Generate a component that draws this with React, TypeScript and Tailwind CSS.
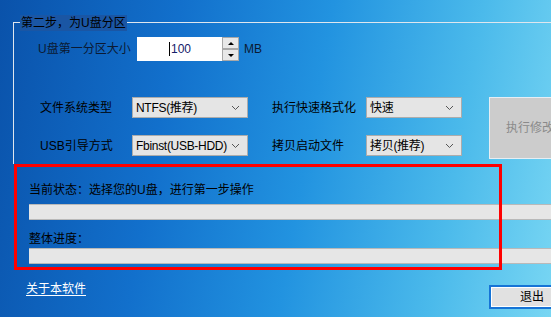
import React from "react";

function Chevron() {
  return (
    <svg width="9" height="6" viewBox="0 0 9 6" className="shrink-0">
      <polyline points="1,1 4.5,4.5 8,1" fill="none" stroke="#555" strokeWidth="1" />
    </svg>
  );
}

function Select({ value, width }: { value: string; width: string }) {
  return (
    <div
      className={`${width} flex h-[21px] items-center justify-between border border-[#acacac] bg-[#e5e5e5] pl-[3px] pr-[7px]`}
    >
      <span className="whitespace-nowrap tracking-[-0.3px]">{value}</span>
      <Chevron />
    </div>
  );
}

export default function App() {
  return (
    <div className="relative h-[317px] w-[551px] overflow-hidden bg-[linear-gradient(100deg,#0a52aa_0%,#1270cc_30%,#2293e0_55%,#4bbaeb_80%,#78d6f3_100%)] font-['Liberation_Sans','Noto_Sans_CJK_SC',sans-serif] text-[12px] leading-[14px] text-black">
      {/* group box */}
      <div className="relative ml-[13px] mt-[22px] h-[142px] border-l border-t border-[#dfe6ee] pl-[24px] pt-[14px]">
        <span className="absolute left-[6px] top-[-8px] bg-[#1a56a4] px-[1px] py-[1px] whitespace-nowrap">
          第二步，为U盘分区
        </span>

        <div className="flex h-[24px] items-center">
          <span className="w-[99px] whitespace-nowrap text-[#0b1a33]">U盘第一分区大小</span>
          <div className="flex h-[24px] w-[85px] items-center bg-white pl-[32px] text-[#14206a]">
            <span className="mr-[1px] h-[14px] w-[1px] bg-black" />
            100
          </div>
          <div className="flex h-[24px] w-[17px] flex-col">
            <div className="flex h-[12px] items-center justify-center border border-[#a8a8a8] bg-[#e8e8e8]">
              <span className="h-0 w-0 border-x-[3px] border-b-[3px] border-x-transparent border-b-black" />
            </div>
            <div className="flex h-[12px] items-center justify-center border border-[#a8a8a8] bg-[#e8e8e8]">
              <span className="h-0 w-0 border-x-[3px] border-t-[3px] border-x-transparent border-t-black" />
            </div>
          </div>
          <span className="ml-[5px] text-[#0b1a33]">MB</span>
        </div>

        <div className="mt-[36px] flex">
          <div className="ml-[2px] flex flex-col gap-[17px]">
            <div className="flex items-center">
              <span className="w-[92px] whitespace-nowrap">文件系统类型</span>
              <Select value="NTFS(推荐)" width="w-[116px]" />
              <span className="ml-[24px] w-[94px] whitespace-nowrap">执行快速格式化</span>
              <Select value="快速" width="w-[96px]" />
            </div>
            <div className="flex items-center">
              <span className="w-[92px] whitespace-nowrap">USB引导方式</span>
              <Select value="Fbinst(USB-HDD)" width="w-[116px]" />
              <span className="ml-[24px] w-[94px] whitespace-nowrap">拷贝启动文件</span>
              <Select value="拷贝(推荐)" width="w-[96px]" />
            </div>
          </div>
          <div className="ml-[27px] flex h-[62px] w-[80px] shrink-0 items-center border border-[#e6eef4] bg-[#cccccc] pl-[16px] text-[#8a8a8a] whitespace-nowrap">
            执行修改
          </div>
        </div>
      </div>

      {/* status */}
      <div className="ml-[29px] mt-[19px]">
        <div className="whitespace-nowrap">当前状态：选择您的U盘，进行第一步操作</div>
        <div className="mt-[7px] h-[16px] w-[540px] border-y border-[#b9b9b9] bg-[#e6e6e6]" />
        <div className="mt-[12px]">整体进度：</div>
        <div className="mt-[2px] h-[16px] w-[540px] border-y border-[#b9b9b9] bg-[#e6e6e6]" />
      </div>

      <div className="mt-[18px] flex items-start">
        <span className="ml-[26px] text-white underline underline-offset-2">关于本软件</span>
        <div className="ml-auto mr-[-20px] mt-[3px] h-[24px] w-[82px] border-2 border-[#1674d6] bg-[#e1e1e1] pl-[29px] pt-[3px] shadow-[inset_0_0_0_1px_#ffffff]">
          退出
        </div>
      </div>

      {/* red annotation box */}
      <div className="absolute left-[14px] top-[164px] h-[106px] w-[488px] border-[3px] border-[#ff0000]" />
    </div>
  );
}
